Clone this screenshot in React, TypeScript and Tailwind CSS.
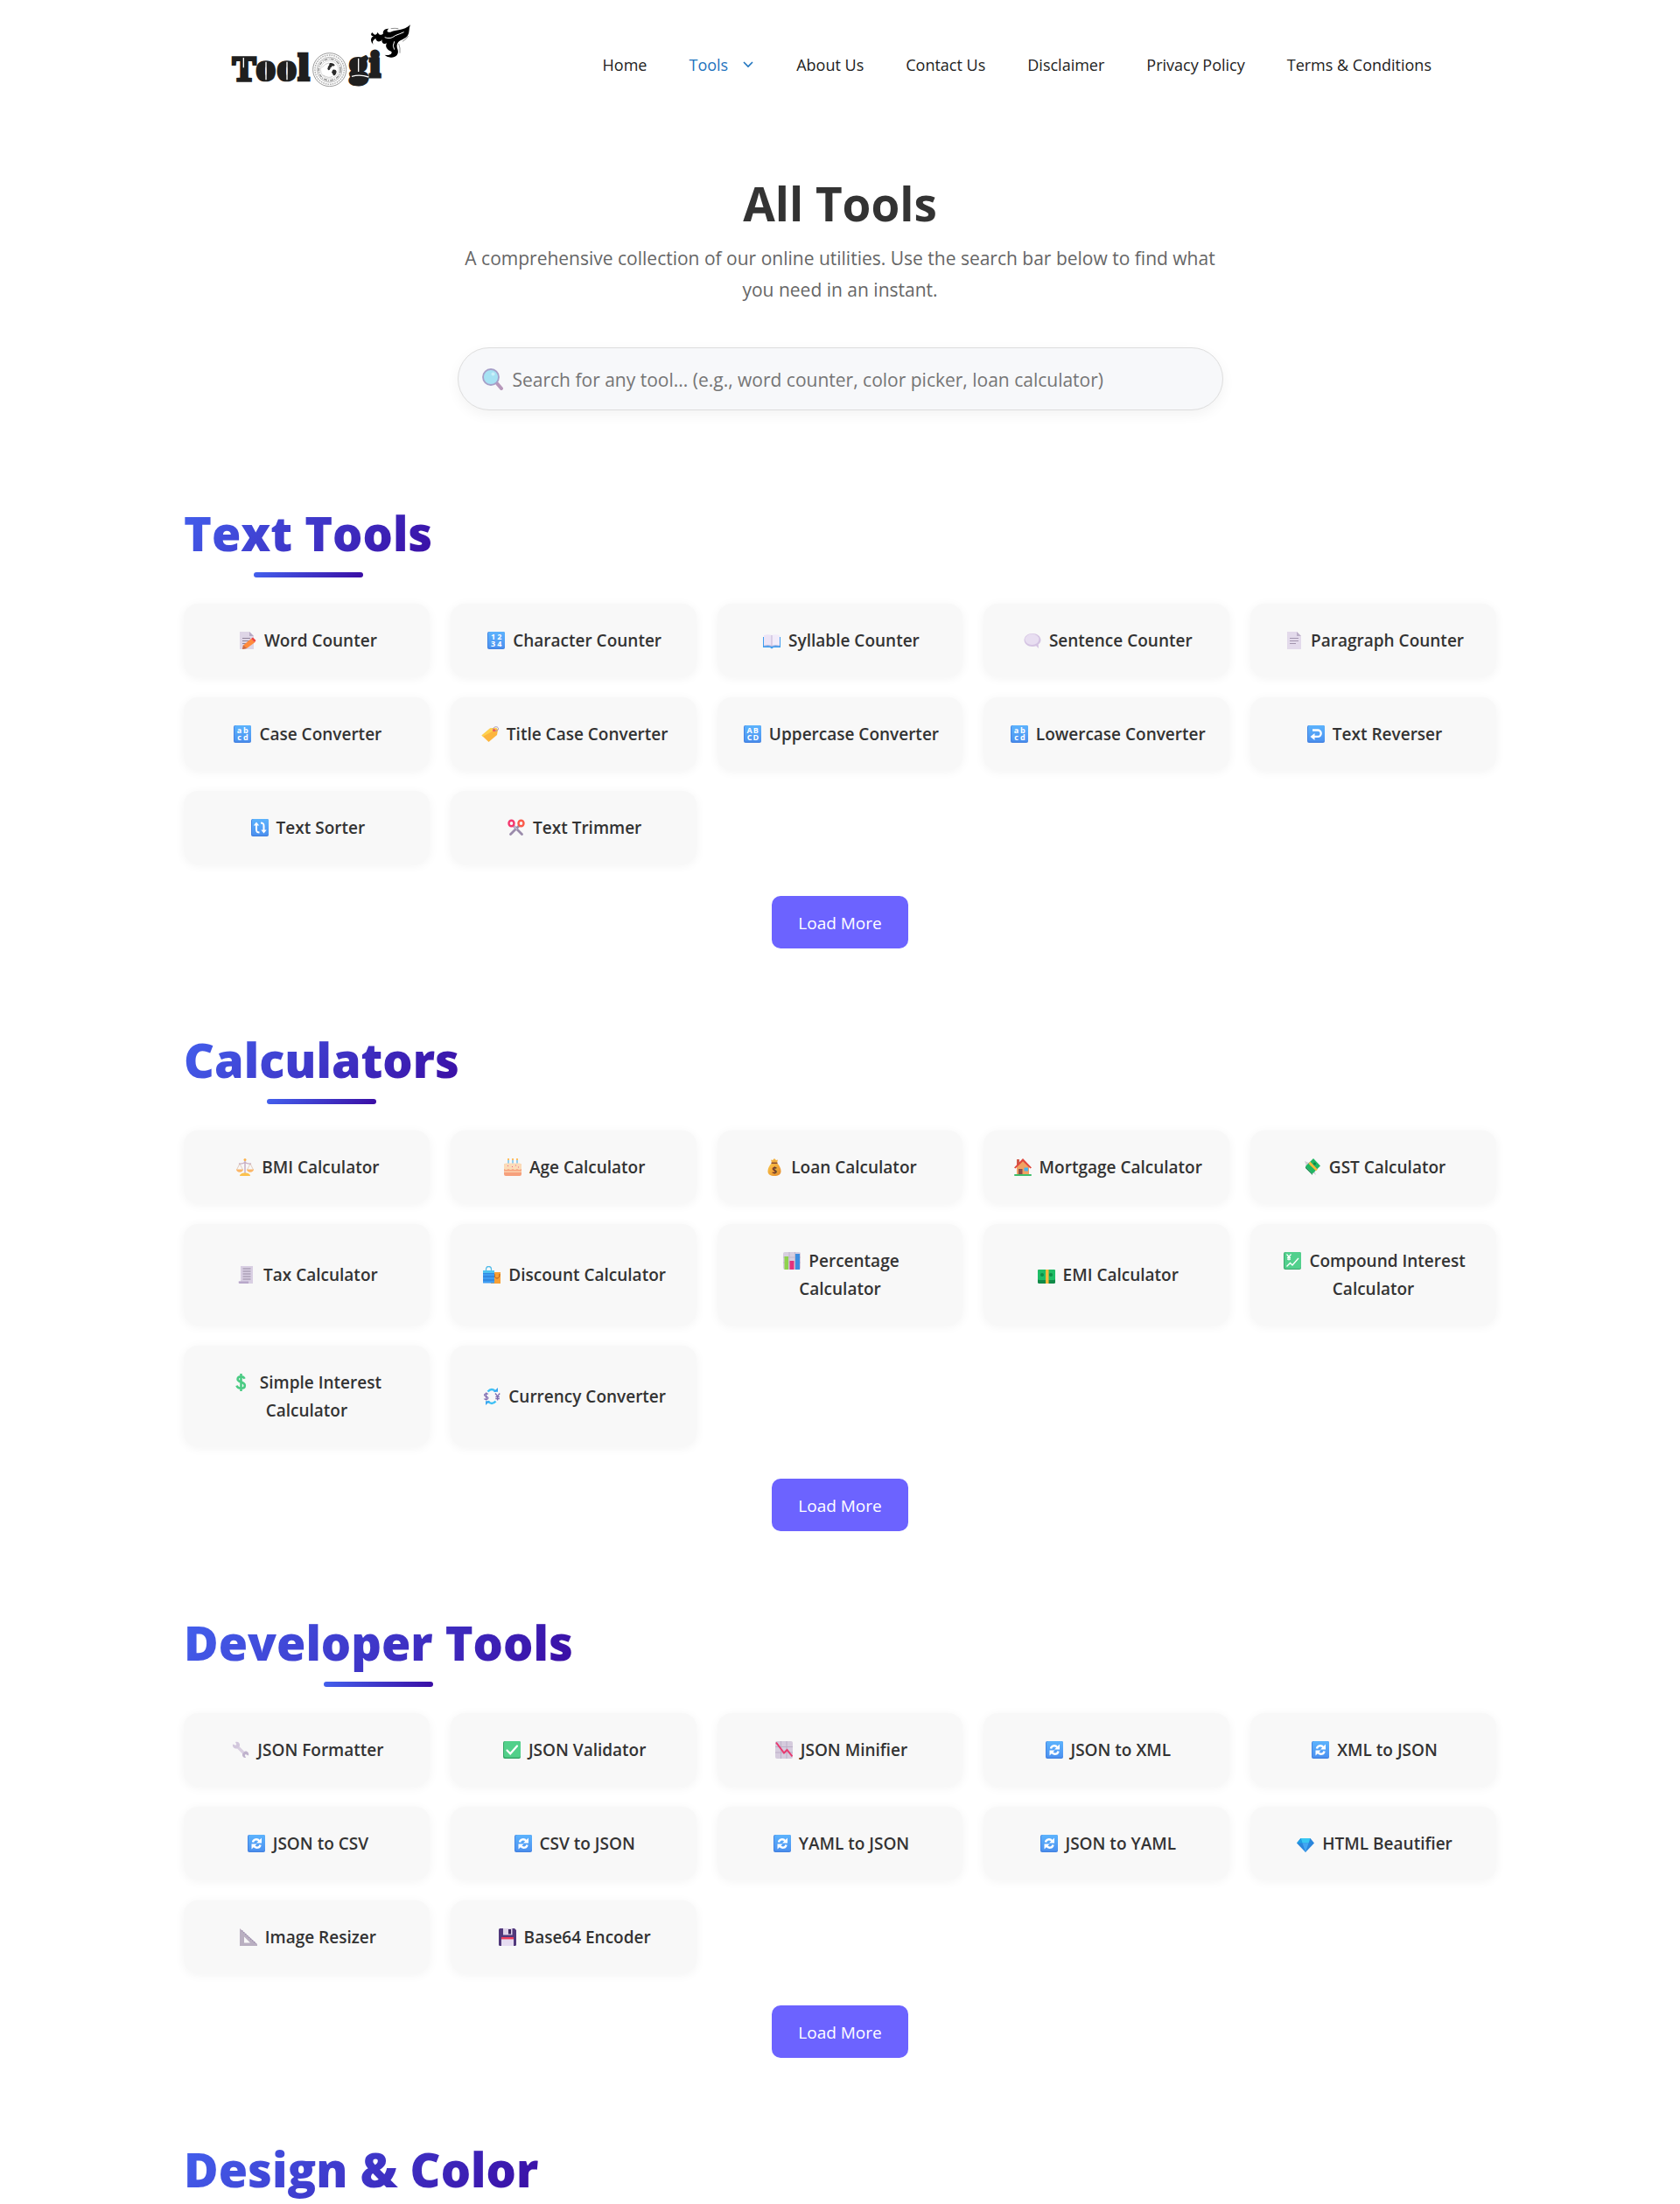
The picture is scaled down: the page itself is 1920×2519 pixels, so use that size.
import type { ReactNode } from "react";

type IconName =
  | "memo" | "numbers" | "book" | "speech" | "page" | "lower" | "tag" | "upper" | "back" | "sort" | "scissors"
  | "scales" | "cake" | "moneybag" | "house" | "wings" | "receipt" | "bags" | "bars" | "bill" | "yen" | "dollar" | "exchange"
  | "wrench" | "check" | "down" | "refresh" | "gem" | "ruler" | "floppy";

type Tool = { icon: IconName; label: string };
type Section = { title: string; tools: Tool[] };

const nav = ["About Us", "Contact Us", "Disclaimer", "Privacy Policy", "Terms & Conditions"];

const sections: Section[] = [
  {
    title: "Text Tools",
    tools: [
      { icon: "memo", label: "Word Counter" },
      { icon: "numbers", label: "Character Counter" },
      { icon: "book", label: "Syllable Counter" },
      { icon: "speech", label: "Sentence Counter" },
      { icon: "page", label: "Paragraph Counter" },
      { icon: "lower", label: "Case Converter" },
      { icon: "tag", label: "Title Case Converter" },
      { icon: "upper", label: "Uppercase Converter" },
      { icon: "lower", label: "Lowercase Converter" },
      { icon: "back", label: "Text Reverser" },
      { icon: "sort", label: "Text Sorter" },
      { icon: "scissors", label: "Text Trimmer" },
    ],
  },
  {
    title: "Calculators",
    tools: [
      { icon: "scales", label: "BMI Calculator" },
      { icon: "cake", label: "Age Calculator" },
      { icon: "moneybag", label: "Loan Calculator" },
      { icon: "house", label: "Mortgage Calculator" },
      { icon: "wings", label: "GST Calculator" },
      { icon: "receipt", label: "Tax Calculator" },
      { icon: "bags", label: "Discount Calculator" },
      { icon: "bars", label: "Percentage Calculator" },
      { icon: "bill", label: "EMI Calculator" },
      { icon: "yen", label: "Compound Interest Calculator" },
      { icon: "dollar", label: "Simple Interest Calculator" },
      { icon: "exchange", label: "Currency Converter" },
    ],
  },
  {
    title: "Developer Tools",
    tools: [
      { icon: "wrench", label: "JSON Formatter" },
      { icon: "check", label: "JSON Validator" },
      { icon: "down", label: "JSON Minifier" },
      { icon: "refresh", label: "JSON to XML" },
      { icon: "refresh", label: "XML to JSON" },
      { icon: "refresh", label: "JSON to CSV" },
      { icon: "refresh", label: "CSV to JSON" },
      { icon: "refresh", label: "YAML to JSON" },
      { icon: "refresh", label: "JSON to YAML" },
      { icon: "gem", label: "HTML Beautifier" },
      { icon: "ruler", label: "Image Resizer" },
      { icon: "floppy", label: "Base64 Encoder" },
    ],
  },
];

function BlueTile({ children }: { children: ReactNode }) {
  return (
    <>
      <rect width="20" height="20" rx="2" fill="#4484e2" />
      <rect x="1" width="19" height="18.6" rx="2" fill="url(#tile-blue)" />
      {children}
    </>
  );
}

function TileLetters({ rows }: { rows: [string, string] }) {
  return (
    <BlueTile>
      <g fill="#fff" fontFamily="Open Sans, sans-serif" fontSize="9" fontWeight="700" textAnchor="middle">
        <text x="6.5" y="8.6">{rows[0][0]}</text>
        <text x="13.8" y="8.6">{rows[0][1]}</text>
        <text x="6.5" y="17">{rows[1][0]}</text>
        <text x="13.8" y="17">{rows[1][1]}</text>
      </g>
    </BlueTile>
  );
}

const art: Record<IconName, ReactNode> = {
  memo: (
    <>
      <path d="M1 0h11l5 5v15H1z" fill="#ded5e6" />
      <path d="M12 0l5 5h-5z" fill="#b7aac4" />
      <path d="M4 7.500h9M4 10.500h9M4 13.500h7" stroke="#8f8399" strokeWidth="1" />
      <path d="M4 20l1-4.500L14 8l4.500 4L9 19z" fill="#ff8a3d" />
      <path d="M14 8l2-1.500 3.500 3.500-1.500 2z" fill="#f0453f" />
      <path d="M4 20l1-4.500 4 3.500z" fill="#c76a4a" />
    </>
  ),
  numbers: <TileLetters rows={["12", "34"]} />,
  lower: <TileLetters rows={["ab", "cd"]} />,
  upper: <TileLetters rows={["AB", "CD"]} />,
  book: (
    <>
      <path d="M0 6h20v12H12l-2 1.500L8 18H0z" fill="#3d9df0" />
      <path d="M1 4q5-1.500 9 0v12q-4-1-9 0z" fill="#ece4f6" />
      <path d="M19 4q-5-1.500-9 0v12q4-1 9 0z" fill="#f2ecfa" />
      <path d="M10 4v12.500" stroke="#c3b4d6" />
      <path d="M1 16.200q5-1 9 .4 4-1.400 9-.4" stroke="#c3b4d6" fill="none" strokeWidth=".8" />
    </>
  ),
  speech: (
    <>
      <path d="M10 2C4.500 2 .5 5.500.5 9.500S4.500 17 10 17c1.600 0 3-.2 4.200-.7L17 19l-.4-4.500c2-1.300 2.900-3 2.900-5C19.500 5.500 15.500 2 10 2z" fill="#d4c3e2" />
      <ellipse cx="9.400" cy="8.800" rx="8" ry="6.200" fill="#e8def1" />
    </>
  ),
  page: (
    <>
      <path d="M2 0h11l5 5v15H2z" fill="#e3daeb" />
      <path d="M13 0l5 5h-5z" fill="#bcafc8" />
      <path d="M5 7.500h10M5 10.500h10M5 13.500h7" stroke="#a295ae" strokeWidth="1.100" />
    </>
  ),
  tag: (
    <>
      <path d="M10 3.500L17 3l2 2-1 6-9.500 8L.5 11.500z" fill="#fcb53d" />
      <path d="M10 3.500L17 3l1 1L2 12.800.5 11.500z" fill="#fdd14f" />
      <circle cx="14.600" cy="5.600" r="1.700" fill="#f05a5a" />
      <path d="M13.500 4.500c0-3 5.500-4 6-.8.2 2-2 3-3.500 2.600" fill="none" stroke="#a393b3" strokeWidth="1" />
    </>
  ),
  back: (
    <BlueTile>
      <path d="M6 5.500h6a3.700 3.700 0 010 7.400H7.500" fill="none" stroke="#fff" strokeWidth="2.300" />
      <path d="M3.500 13l5-4v8z" fill="#fff" />
    </BlueTile>
  ),
  sort: (
    <BlueTile>
      <path d="M9.500 15.500c-3 0-3.500-1-3.500-3.500V6M11 4.500c3 0 3.500 1 3.500 3.500v6" fill="none" stroke="#fff" strokeWidth="2" />
      <path d="M2.800 7.500L6 3.500l3.200 4zM11.300 12.500l3.200 4 3.200-4z" fill="#fff" />
    </BlueTile>
  ),
  scissors: (
    <>
      <path d="M7 8l9.500 9.500M13 8l-9.500 9.500" stroke="#9a8bab" strokeWidth="2.800" strokeLinecap="round" />
      <path d="M7 8l4 4" stroke="#c9bfd3" strokeWidth="1.200" />
      <ellipse cx="4.500" cy="5" rx="3" ry="3.300" fill="none" stroke="#f4386e" strokeWidth="2.400" />
      <ellipse cx="15.500" cy="5" rx="3" ry="3.300" fill="none" stroke="#fb5a4a" strokeWidth="2.400" />
    </>
  ),
  scales: (
    <>
      <path d="M10 2v15M3 6q3.500.6 7-1.500Q13.500 6.600 17 6" fill="none" stroke="#c5a9c0" strokeWidth="1.400" />
      <path d="M4 6l-3.500 7M4 6l3.500 7M16 6l-3.500 7M16 6l3.500 7" stroke="#d8b7a8" strokeWidth=".7" />
      <path d="M0 12.500h8c0 2-1.800 3.200-4 3.200S0 14.500 0 12.500zM12 12.500h8c0 2-1.800 3.200-4 3.200s-4-1.200-4-3.200z" fill="#fbb668" />
      <path d="M4 20c0-2.200 2.500-3.500 6-3.500s6 1.300 6 3.500z" fill="#fbc14d" />
      <circle cx="10" cy="1.500" r="1.500" fill="#fbb24c" />
    </>
  ),
  cake: (
    <>
      <path d="M5 2v5M10 2v5M15 2v5" stroke="#7cc6ee" strokeWidth="1.600" />
      <path d="M5 0v2M10 0v2M15 0v2" stroke="#fdae3d" strokeWidth="1.600" />
      <rect x="0" y="6" width="20" height="14" rx="2" fill="#f6a07c" />
      <path d="M0 8q0-2.500 2-2.500h16q2 0 2 2.500v4q-2.500 2-5 0-2.500 2-5 0-2.500 2-5 0-2.500 2-5 0z" fill="#fbdcb8" />
      <rect x="0" y="14.500" width="20" height="1.300" fill="#fcd9b6" />
      <path d="M4 8.500h1M9 9.500h1M13 8h1M16 10h1" stroke="#e7628f" />
    </>
  ),
  moneybag: (
    <>
      <path d="M7 5l-1-3.500L8 2l2-2 2 2 2-.5L13 5z" fill="#f2b142" />
      <path d="M7.200 5h5.600c3 3 4.700 6.300 4.700 9.500 0 4-3 5.500-7.500 5.500s-7.500-1.500-7.500-5.500C2.500 11.300 4.200 8 7.200 5z" fill="url(#bag-gold)" />
      <path d="M6.500 5.300h7" stroke="#8a4a2e" strokeWidth="1.500" />
      <text x="10" y="16.600" fontFamily="Open Sans, sans-serif" fontSize="10" fontWeight="700" textAnchor="middle" fill="#6b3a2c">$</text>
    </>
  ),
  house: (
    <>
      <rect x="3" y="1" width="3" height="6" fill="#d05a4b" />
      <path d="M3 9l7-7 7 7v10H3z" fill="#f0a263" />
      <path d="M0 10.500L10 0l10 10.500-1.500 1L10 3.200 1.500 11.500z" fill="#e0483e" />
      <rect x="5" y="12" width="4.500" height="7" fill="#8c4f4a" />
      <rect x="11.500" y="10.500" width="4.500" height="4" fill="#48b4ee" />
      <rect x="0" y="18" width="20" height="2" rx="1" fill="#3fbf6b" />
    </>
  ),
  wings: (
    <>
      <path d="M1 3l5 2-2 7zM14 19L7 14l5-1z" fill="#d4cdda" />
      <path d="M11 0l8 8.500-9 9L2 9z" fill="#1fb764" />
      <path d="M2 9l8 8.500V19L2 11z" fill="#0f8547" />
      <path d="M5.500 6l8.500 8.300 1.800-1.800L7.500 3.700z" fill="#fbb83a" />
      <circle cx="12.500" cy="6" r="1.500" fill="#0f8547" />
    </>
  ),
  receipt: (
    <>
      <path d="M3 0h14v20H2q-2 0-1.500-2.500H3z" fill="#d9cfe3" />
      <path d="M1 17.500h11V20H2q-1.500 0-1-2.500z" fill="#b8a7c9" />
      <path d="M5.500 3h9M5.500 6h9M5.500 9h9M5.500 12h9M5.500 15h9" stroke="#968aa2" strokeWidth="1.100" />
    </>
  ),
  bags: (
    <>
      <path d="M10 7h10v13H9z" fill="#f8a035" />
      <path d="M13 9q0 5 3 5t3-5" stroke="#b05b1e" fill="none" />
      <path d="M3.500 6V4q0-3.500 3-3.500t3 3.500v2" stroke="#54bce9" fill="none" strokeWidth="1.300" />
      <path d="M0 5h13v14.500H0z" fill="#3f9df2" />
      <path d="M0 8h13M0 12h13M0 16h13" stroke="#2774cd" strokeWidth="1" />
      <path d="M0 5h13v3H0z" fill="#4ec3f0" />
    </>
  ),
  bars: (
    <>
      <rect width="20" height="20" rx="2" fill="#d8cfe0" />
      <path d="M0 6h20M0 12h20M7 0v20M13.500 0v20" stroke="#bdb2c8" strokeWidth=".8" />
      <rect x="1.500" y="5" width="4.500" height="15" fill="#8fd24e" />
      <rect x="7.500" y="10" width="5" height="10" fill="#e2327d" />
      <rect x="14" y="2" width="5" height="18" fill="#3c8ddf" />
    </>
  ),
  bill: (
    <>
      <rect y="4" width="20" height="16" rx="1.500" fill="#128a48" />
      <rect y="4" width="20" height="12" rx="1.500" fill="#1fbd66" />
      <circle cx="5" cy="10" r="2" fill="#0f8d47" />
      <circle cx="15" cy="10" r="2" fill="#0f8d47" />
      <rect x="9" y="4" width="3.500" height="16" fill="#fcb93e" />
    </>
  ),
  yen: (
    <>
      <rect width="20" height="20" rx="2" fill="#3daa70" />
      <rect x="1" width="19" height="19" rx="2" fill="#52d08d" />
      <path d="M3.500 2.500L6 5.500l2.500-3M6 5.500v4M4 6.300h4M4 8.200h4" stroke="#fff" strokeWidth="1.200" fill="none" />
      <path d="M3.500 16.500l4-4 2.500 2.500 7-8" stroke="#fff" strokeWidth="1.400" fill="none" />
    </>
  ),
  dollar: (
    <path d="M11.500 5.800C10.800 3.900 9.500 3.300 7.300 3.300 5 3.300 3.600 4.500 3.600 6.300c0 4.200 8.200 2.400 8.200 7.200 0 2.200-1.800 3.300-4.300 3.300-2.600 0-4.300-.9-5-3.200M7.500 0v20" fill="none" stroke="#4bcb84" strokeWidth="2.600" />
  ),
  exchange: (
    <>
      <path d="M5.500 4.500q4.500-5 9 0" fill="none" stroke="#3fc0f4" strokeWidth="2.600" />
      <path d="M14.500 15.500q-4.500 5-9 0" fill="none" stroke="#3fc0f4" strokeWidth="2.600" />
      <path d="M12 4.800h5V0zM8 15.200H3V20z" fill="#3aa5f0" />
      <path d="M5.700 7.500C4.500 6.200 1.500 6.600 1.500 8.500c0 2.200 4.400 1 4.400 3.300 0 2-3.200 2.300-4.700.8M3.600 5.500v9" fill="none" stroke="#7d6bb0" strokeWidth="1.200" />
      <path d="M14 6.500l2.600 3.500 2.600-3.500M16.600 10v4.500M14.300 10.600h4.600M14.300 12.600h4.600" fill="none" stroke="#7d6bb0" strokeWidth="1.300" />
    </>
  ),
  wrench: (
    <>
      <path d="M6 6l9 9" stroke="#d9cfe1" strokeWidth="3.200" />
      <path d="M1 3.500l3.300 1.300 1-1L4 1c3-1 5.500 1 5 4.500L6 8.500C3 9 .4 6.800 1 3.500z" fill="#d2c7dc" />
      <path d="M19 16.500L15.700 15l-1 1 1.300 3c-2.500.3-4.500-1.500-4-4.500l3-3c3-.5 4.800 2 4 5z" fill="#bfb2cc" />
    </>
  ),
  check: (
    <>
      <rect width="20" height="20" rx="2" fill="#37a869" />
      <rect x="1" width="19" height="18.600" rx="2" fill="#52d08a" />
      <path d="M4.500 10.500l3.700 3.800L16 5.500" fill="none" stroke="#fff" strokeWidth="2.200" strokeLinecap="round" />
    </>
  ),
  down: (
    <>
      <rect width="20" height="20" rx="2" fill="#d5cbdd" />
      <path d="M0 6.500h20M0 13h20M6.500 0v20M13 0v20" stroke="#b9adc5" strokeWidth=".9" />
      <path d="M1 1.500l9 12 3.500-3.500 6 7.500" fill="none" stroke="#e8396f" strokeWidth="2" />
    </>
  ),
  refresh: (
    <BlueTile>
      <path d="M6 8.500c.5-3.500 5-4.500 7.500-1.300M14.500 11.500c-.5 3.500-5 4.500-7.500 1.300" fill="none" stroke="#fff" strokeWidth="2.400" />
      <path d="M16 3.500v6h-6zM4.500 16.500v-6h6z" fill="#fff" />
    </BlueTile>
  ),
  gem: (
    <>
      <path d="M4.500 4h11L20 9.500 10 20 0 9.500z" fill="#2a86dc" />
      <path d="M4.500 4h11L13.500 9.500h-7z" fill="#37c7f2" />
      <path d="M6.500 9.500h7L10 20z" fill="#43a6f2" />
      <path d="M4.500 4l2 5.500H0z" fill="#1f9fe4" />
    </>
  ),
  ruler: (
    <>
      <path d="M0 0l20 18v2H0z" fill="#b9afc1" />
      <path d="M5 9.500l7 7H5z" fill="#f8f8f8" />
      <path d="M2.500 2.500l16 15" stroke="#8e7da3" strokeWidth="1.100" strokeDasharray="1.200 1.500" />
    </>
  ),
  floppy: (
    <>
      <path d="M1.500 0H18l2 2v16.500q0 1.500-1.500 1.500h-17Q0 20 0 18.500v-17Q0 0 1.500 0z" fill="#51397c" />
      <rect x="5" width="10.500" height="7.500" fill="#dfd4ea" />
      <rect x="11" y="1" width="3" height="5.500" fill="#3c285f" />
      <rect x="3" y="10.500" width="14" height="9.500" fill="#e6dcf1" />
      <rect x="3" y="10" width="14" height="2.400" fill="#ee3e5c" />
    </>
  ),
};

function Icon({ name }: { name: IconName }) {
  return (
    <svg viewBox="0 0 20 20" aria-hidden="true" className="mr-1 ml-[3px] inline-block h-5 w-5 align-[-3px]">
      {art[name]}
    </svg>
  );
}

function Gradients() {
  return (
    <svg aria-hidden="true" className="absolute h-0 w-0">
      <defs>
        <linearGradient id="tile-blue" x1="0" y1="0" x2="0" y2="1">
          <stop offset="0" stopColor="#5cb3fd" />
          <stop offset="1" stopColor="#4c92f0" />
        </linearGradient>
        <linearGradient id="bag-gold" x1="0" y1="0" x2="1" y2="1">
          <stop offset="0" stopColor="#fcc84a" />
          <stop offset="1" stopColor="#e58a2c" />
        </linearGradient>
      </defs>
    </svg>
  );
}

function Logo() {
  return (
    <svg viewBox="30 42 660 300" role="img" aria-label="Toologi" className="h-[100px] w-[220px]">
      <g fill="#1f1f1f" stroke="#1f1f1f" fontFamily="Liberation Serif, serif" fontWeight="700">
        <text x="47" y="245" fontSize="120" strokeWidth="10">T</text>
        <text x="130 202 274" y="244" fontSize="126" strokeWidth="14">ool</text>
        <text x="449 519" y="232" fontSize="118" strokeWidth="15">gi</text>
      </g>
      <path d="M85 168v34M162 182v62M234 182v62M479 170v46" stroke="#fff" strokeWidth="4" />
      <path d="M456 232q28-8 58 2" stroke="#fff" strokeWidth="4" fill="none" />
      <g fill="none" stroke="#666">
        <circle cx="380" cy="209" r="57" strokeWidth="2" />
        <circle cx="380" cy="209" r="50" strokeWidth="4" stroke="#aaa" strokeDasharray="5 3" />
        <circle cx="380" cy="209" r="43" strokeWidth="1.500" />
        <circle cx="380" cy="209" r="37" strokeWidth="4" stroke="#888" strokeDasharray="12 4 3 3" />
        <circle cx="380" cy="209" r="31" strokeWidth="1.500" stroke="#aaa" />
        <path d="M354 202q12-16 24-16M358 228q20 12 32 4" strokeWidth="1.500" stroke="#999" />
      </g>
      <path d="M380 186q14-2 18 8-6 4-9 2-2 8-12 10-6-6 1-11zM372 203q8-4 11 2-2 7-8 5zM391 209q11-2 13 6-2 14-11 14-2-8-6-11z" fill="#2b2b2b" />
      <path
        d="M657 55C648 74 662 94 626 107C612 113 608 124 613 138C620 158 605 168 590 167C580 166 573 162 569 158C584 161 596 156 592 147C580 143 568 132 576 118C567 124 555 116 561 105C551 118 540 112 538 102C528 108 525 116 531 123C519 114 519 99 531 94C521 95 520 84 527 82C533 92 541 91 545 80C548 90 557 93 564 85C561 76 570 67 583 68C572 76 580 84 592 79C606 72 634 76 657 55Z"
        fill="#000"
      />
      <path d="M569 98q20 8 36-6 16-6 30-12M602 112q-8 16 0 28M586 72q16-2 26-2" fill="none" stroke="#fff" strokeWidth="3" />
      <path d="M617 120q6 14 4 32M630 112q12-6 20-18M590 68q14-2 26 0" fill="none" stroke="#222" strokeWidth="1.500" />
    </svg>
  );
}

function Header() {
  return (
    <header className="mx-auto flex h-[148px] w-full max-w-[1400px] items-center justify-between">
      <a href="#home">
        <Logo />
      </a>
      <nav aria-label="Primary" className="flex text-lg leading-[60px] text-[#222]">
        <a href="#home" className="px-6">Home</a>
        <a href="#tools" className="flex items-center px-6 text-[#1e73be]">
          Tools
          <svg viewBox="0 0 14 8" aria-hidden="true" className="ml-4 h-2 w-3.5" fill="none" stroke="currentColor" strokeWidth="1.600">
            <path d="M2 1l5 5 5-5" />
          </svg>
        </a>
        {nav.map((item) => (
          <a key={item} href="#page" className="px-6">{item}</a>
        ))}
      </nav>
    </header>
  );
}

function SearchBar() {
  return (
    <div className="mx-auto mt-12 flex h-[72px] w-full max-w-[875px] items-center gap-2.5 rounded-full border border-[#ddd] bg-[#f7f8fa] pr-7 pl-[27px] shadow-[0_5px_15px_rgba(0,0,0,0.05)]">
      <svg viewBox="0 0 25 25" aria-hidden="true" className="h-[25px] w-[25px] shrink-0">
        <path d="M16 16l6 7" stroke="#b797ba" strokeWidth="4" strokeLinecap="round" />
        <circle cx="10" cy="10" r="9" fill="#a6e2f3" stroke="#a69fc8" strokeWidth="1.800" />
        <circle cx="12.500" cy="6.500" r="2" fill="#c9f0fa" />
      </svg>
      <input
        type="search"
        aria-label="Search tools"
        placeholder="Search for any tool... (e.g., word counter, color picker, loan calculator)"
        className="min-w-0 flex-1 bg-transparent pt-0.5 text-[21px] leading-8 text-[#333] outline-none placeholder:text-[#757575]"
      />
    </div>
  );
}

function SectionTitle({ children }: { children: string }) {
  return (
    <h2 className="w-fit bg-linear-[135deg,#4361ee,#3a0ca3] bg-clip-text text-[54px] leading-[68px] font-extrabold text-transparent">
      {children}
    </h2>
  );
}

function ToolSection({ title, tools }: Section) {
  return (
    <section className="mb-[93px]">
      <div className="mb-[30px] flex w-fit flex-col items-center gap-[11px]">
        <SectionTitle>{title}</SectionTitle>
        <div className="h-1.5 w-[125px] rounded-full bg-linear-[135deg,#4361ee,#3a0ca3]" />
      </div>
      <div className="grid grid-cols-5 gap-6">
        {tools.map((tool) => (
          <a
            key={tool.label}
            href="#tool"
            className="flex items-center justify-center rounded-2xl bg-[#f8f8f8] px-[26px] pt-[26px] pb-[25px] text-center text-[19px] leading-8 font-semibold text-[#333] shadow-[0_2px_12px_rgba(0,0,0,0.05)]"
          >
            <span>
              <Icon name={tool.icon} /> {tool.label}
            </span>
          </a>
        ))}
      </div>
      <button type="button" className="mx-auto mt-[37px] block h-[60px] rounded-[10px] bg-[#6c63ff] px-[30px] pt-0.5 text-[19px] text-white">
        Load More
      </button>
    </section>
  );
}

export default function App() {
  return (
    <div className="bg-white font-['Open_Sans',sans-serif]">
      <Gradients />
      <Header />
      <main className="mx-auto w-full max-w-[1500px] pt-[53px]">
        <div className="mb-[106px] text-center">
          <h1 className="text-[53px] leading-[64px] font-bold text-[#333]">All Tools</h1>
          <p className="mx-auto mt-3 max-w-[875px] text-[21px] leading-9 text-[#666]">
            A comprehensive collection of our online utilities. Use the search bar below to find what you need in an instant.
          </p>
          <SearchBar />
        </div>
        {sections.map((section) => (
          <ToolSection key={section.title} {...section} />
        ))}
        <SectionTitle>Design &amp; Color</SectionTitle>
      </main>
    </div>
  );
}
